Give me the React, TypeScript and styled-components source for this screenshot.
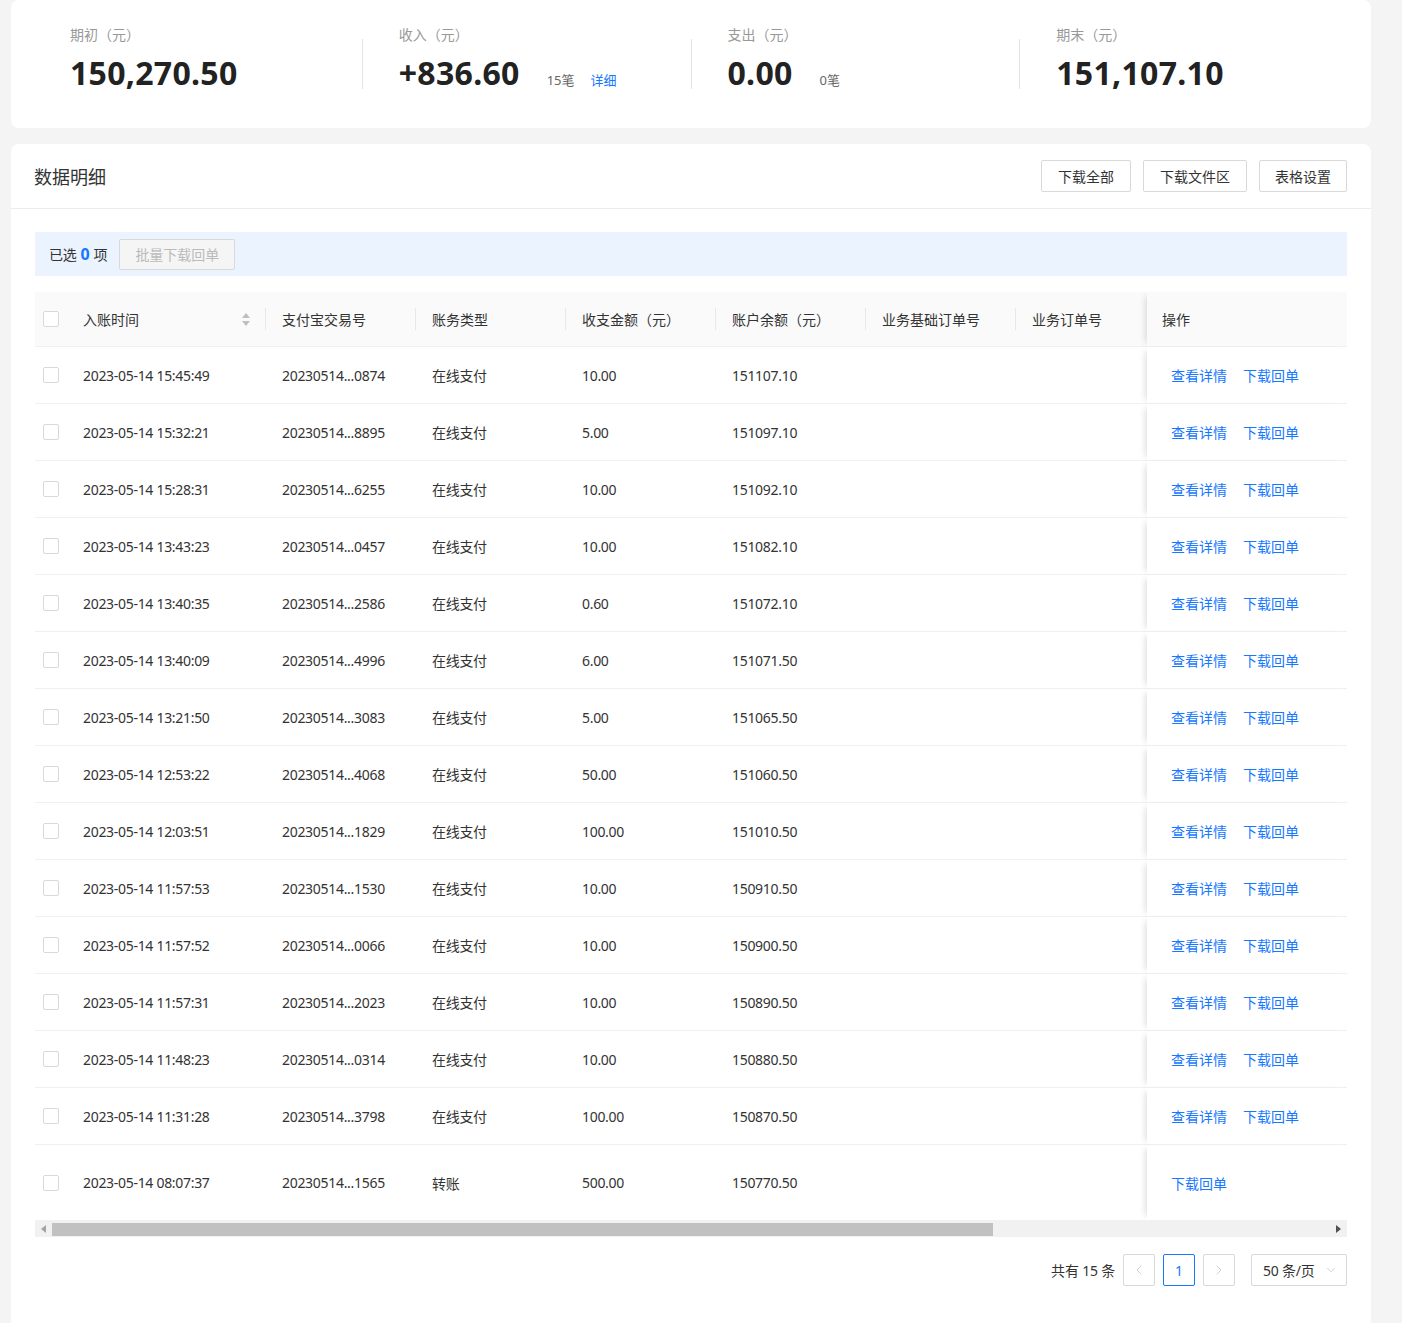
import React from "react"
import styled, { createGlobalStyle } from "styled-components"
import { ChevronLeft, ChevronRight, ChevronDown } from "lucide-react"

const GlobalStyle = createGlobalStyle`
    body {
        margin: 0;
        background-color: #f4f4f4;
        font-family: "Noto Sans", "Noto Sans CJK SC", sans-serif;
        color: #333;
        font-size: 14px;
    }
`

const Page = styled.div`
    width: 1360px;
    padding-left: 11px;
    display: flex;
    flex-direction: column;
    gap: 16px;
`

const Card = styled.div`
    background-color: #fff;
    border-radius: 8px;
`

const StatRow = styled(Card)`
    display: flex;
    align-items: flex-start;
    padding: 25px 23px 33px;
`

const Stat = styled.div`
    flex: 1;
    padding-left: 36px;
`

const StatDivider = styled.div`
    width: 1px;
    height: 50px;
    margin-top: 14px;
    background-color: #e3e3e3;
`

const StatLabel = styled.div`
    font-size: 14px;
    line-height: 20px;
    color: #999;
`

const StatValueRow = styled.div`
    display: flex;
    align-items: baseline;
    margin-top: 6px;
    height: 44px;
`

const StatValue = styled.span`
    font-size: 32px;
    line-height: 44px;
    font-weight: 700;
    color: #222;
    letter-spacing: 0.3px;
`

const StatCount = styled.span`
    font-size: 13px;
    color: #666;
    margin-left: 27px;
`

const LinkText = styled.a<{ $gap?: number; $small?: boolean }>`
    color: #1677ff;
    text-decoration: none;
    font-size: ${p => (p.$small ? 13 : 14)}px;
    margin-left: ${p => p.$gap || 0}px;
    cursor: pointer;
`

const DetailHeader = styled.div`
    display: flex;
    align-items: center;
    justify-content: space-between;
    height: 64px;
    padding: 0 24px 0 23px;
    border-bottom: 1px solid #ececec;
`

const DetailTitle = styled.h2`
    margin: 0;
    font-size: 18px;
    font-weight: 400;
    color: #333;
`

const ButtonGroup = styled.div`
    display: flex;
    gap: 12px;
`

const Button = styled.button<{ $narrow?: boolean }>`
    height: 32px;
    padding: 0 ${p => (p.$narrow ? 15 : 16)}px;
    background-color: #fff;
    border: 1px solid #d9d9d9;
    border-radius: 2px;
    font-family: inherit;
    font-size: 14px;
    color: #333;
    cursor: pointer;
`

const DisabledButton = styled(Button)`
    height: 31px;
    padding: 0 15px;
    background-color: #f5f5f5;
    color: #bbb;
    cursor: not-allowed;
`

const DetailBody = styled.div`
    padding: 23px 24px 60px;
`

const SelectBar = styled.div`
    display: flex;
    align-items: center;
    gap: 12px;
    height: 44px;
    padding-left: 14px;
    background-color: #ebf3ff;
    margin-bottom: 16px;
`

const SelectText = styled.span`
    letter-spacing: -0.2px;
`

const SelectCount = styled.b`
    color: #1677ff;
    font-size: 16px;
    margin: 0 4px;
`

const Table = styled.table`
    width: 1312px;
    table-layout: fixed;
    border-collapse: separate;
    border-spacing: 0;
`

const Th = styled.th<{ $divider?: boolean; $fixed?: boolean; $check?: boolean }>`
    height: 54px;
    text-align: left;
    font-weight: 400;
    color: #333;
    white-space: nowrap;
    background-color: #fafafa;
    border-bottom: 1px solid #f0f0f0;
    background-image: ${p => (p.$divider ? "linear-gradient(#e8e8e8, #e8e8e8)" : "none")};
    background-size: 1px 22px;
    background-repeat: no-repeat;
    background-position: right center;
    padding: 0 0 0 ${p => (p.$check ? 8 : p.$fixed ? 15 : 16)}px;
    box-shadow: ${p => (p.$fixed ? "-6px 0 6px -4px rgba(0, 0, 0, 0.12)" : "none")};
`

const Td = styled.td<{ $fixed?: boolean; $tall?: boolean; $check?: boolean }>`
    height: ${p => (p.$tall ? 75 : 56)}px;
    padding: 0 0 0 ${p => (p.$check ? 8 : p.$fixed ? 24 : 16)}px;
    white-space: nowrap;
    overflow: hidden;
    color: #333;
    letter-spacing: -0.3px;
    background-color: #fff;
    border-bottom: ${p => (p.$tall ? "none" : "1px solid #f0f0f0")};
    box-shadow: ${p => (p.$fixed ? "-6px 0 6px -4px rgba(0, 0, 0, 0.12)" : "none")};
`

const Checkbox = styled.span`
    display: block;
    width: 14px;
    height: 14px;
    border: 1px solid #d9d9d9;
    border-radius: 2px;
    background-color: #fff;
`

const SortHead = styled.div`
    display: flex;
    align-items: center;
    justify-content: space-between;
    padding-right: 16px;
`

const SortIcon = styled.svg`
    width: 8px;
    height: 13px;
`

const Actions = styled.div`
    display: flex;
    gap: 16px;
    letter-spacing: 0;
`

const ScrollTrack = styled.div`
    display: flex;
    align-items: center;
    height: 17px;
    background-color: #f1f1f1;
`

const ScrollArrow = styled.div`
    width: 17px;
    height: 17px;
    display: flex;
    align-items: center;
    justify-content: center;
`

const ScrollRail = styled.div`
    flex: 1;
    display: flex;
    align-items: center;
    height: 17px;
`

const ScrollThumb = styled.div<{ $ratio: number }>`
    width: ${p => p.$ratio * 100}%;
    height: 13px;
    margin-top: 2px;
    background-color: #c1c1c1;
`

const Pager = styled.div`
    display: flex;
    justify-content: flex-end;
    align-items: center;
    margin-top: 17px;
    gap: 8px;
`

const PagerTotal = styled.span`
    color: #333;
    letter-spacing: -0.2px;
`

const PageItem = styled.div<{ $active?: boolean }>`
    width: 30px;
    height: 30px;
    display: flex;
    align-items: center;
    justify-content: center;
    border: 1px solid ${p => (p.$active ? "#1677ff" : "#d9d9d9")};
    border-radius: 2px;
    color: ${p => (p.$active ? "#1677ff" : "#c4c4c4")};
    background-color: #fff;
`

const SizeSelect = styled.div`
    width: 75px;
    height: 30px;
    margin-left: 8px;
    padding: 0 8px 0 11px;
    display: flex;
    align-items: center;
    justify-content: space-between;
    border: 1px solid #d9d9d9;
    border-radius: 2px;
    color: #333;
    letter-spacing: -0.2px;
`

interface Row {
    time: string
    tradeNo: string
    type: string
    amount: string
    balance: string
    detail: boolean
}

const rows: Row[] = [
    { time: "2023-05-14 15:45:49", tradeNo: "20230514...0874", type: "在线支付", amount: "10.00", balance: "151107.10", detail: true },
    { time: "2023-05-14 15:32:21", tradeNo: "20230514...8895", type: "在线支付", amount: "5.00", balance: "151097.10", detail: true },
    { time: "2023-05-14 15:28:31", tradeNo: "20230514...6255", type: "在线支付", amount: "10.00", balance: "151092.10", detail: true },
    { time: "2023-05-14 13:43:23", tradeNo: "20230514...0457", type: "在线支付", amount: "10.00", balance: "151082.10", detail: true },
    { time: "2023-05-14 13:40:35", tradeNo: "20230514...2586", type: "在线支付", amount: "0.60", balance: "151072.10", detail: true },
    { time: "2023-05-14 13:40:09", tradeNo: "20230514...4996", type: "在线支付", amount: "6.00", balance: "151071.50", detail: true },
    { time: "2023-05-14 13:21:50", tradeNo: "20230514...3083", type: "在线支付", amount: "5.00", balance: "151065.50", detail: true },
    { time: "2023-05-14 12:53:22", tradeNo: "20230514...4068", type: "在线支付", amount: "50.00", balance: "151060.50", detail: true },
    { time: "2023-05-14 12:03:51", tradeNo: "20230514...1829", type: "在线支付", amount: "100.00", balance: "151010.50", detail: true },
    { time: "2023-05-14 11:57:53", tradeNo: "20230514...1530", type: "在线支付", amount: "10.00", balance: "150910.50", detail: true },
    { time: "2023-05-14 11:57:52", tradeNo: "20230514...0066", type: "在线支付", amount: "10.00", balance: "150900.50", detail: true },
    { time: "2023-05-14 11:57:31", tradeNo: "20230514...2023", type: "在线支付", amount: "10.00", balance: "150890.50", detail: true },
    { time: "2023-05-14 11:48:23", tradeNo: "20230514...0314", type: "在线支付", amount: "10.00", balance: "150880.50", detail: true },
    { time: "2023-05-14 11:31:28", tradeNo: "20230514...3798", type: "在线支付", amount: "100.00", balance: "150870.50", detail: true },
    { time: "2023-05-14 08:07:37", tradeNo: "20230514...1565", type: "转账", amount: "500.00", balance: "150770.50", detail: false },
]

const colWidths = [32, 199, 150, 150, 150, 150, 150, 131, 200]

const App = () => {
    return (
        <Page>
            <GlobalStyle />
            <StatRow>
                <Stat>
                    <StatLabel>期初（元）</StatLabel>
                    <StatValueRow>
                        <StatValue>150,270.50</StatValue>
                    </StatValueRow>
                </Stat>
                <StatDivider />
                <Stat>
                    <StatLabel>收入（元）</StatLabel>
                    <StatValueRow>
                        <StatValue>+836.60</StatValue>
                        <StatCount>15笔</StatCount>
                        <LinkText $gap={16} $small>详细</LinkText>
                    </StatValueRow>
                </Stat>
                <StatDivider />
                <Stat>
                    <StatLabel>支出（元）</StatLabel>
                    <StatValueRow>
                        <StatValue>0.00</StatValue>
                        <StatCount>0笔</StatCount>
                    </StatValueRow>
                </Stat>
                <StatDivider />
                <Stat>
                    <StatLabel>期末（元）</StatLabel>
                    <StatValueRow>
                        <StatValue>151,107.10</StatValue>
                    </StatValueRow>
                </Stat>
            </StatRow>

            <Card>
                <DetailHeader>
                    <DetailTitle>数据明细</DetailTitle>
                    <ButtonGroup>
                        <Button>下载全部</Button>
                        <Button>下载文件区</Button>
                        <Button $narrow>表格设置</Button>
                    </ButtonGroup>
                </DetailHeader>
                <DetailBody>
                    <SelectBar>
                        <SelectText>已选<SelectCount>0</SelectCount>项</SelectText>
                        <DisabledButton>批量下载回单</DisabledButton>
                    </SelectBar>

                    <Table>
                        <colgroup>
                            {colWidths.map((w, i) => (
                                <col key={i} width={w} />
                            ))}
                        </colgroup>
                        <thead>
                            <tr>
                                <Th $check><Checkbox /></Th>
                                <Th $divider>
                                    <SortHead>
                                        入账时间
                                        <SortIcon viewBox="0 0 8 13">
                                            <polygon points="4,0 8,5 0,5" fill="#bfbfbf" />
                                            <polygon points="0,8 8,8 4,13" fill="#bfbfbf" />
                                        </SortIcon>
                                    </SortHead>
                                </Th>
                                <Th $divider>支付宝交易号</Th>
                                <Th $divider>账务类型</Th>
                                <Th $divider>收支金额（元）</Th>
                                <Th $divider>账户余额（元）</Th>
                                <Th $divider>业务基础订单号</Th>
                                <Th>业务订单号</Th>
                                <Th $fixed>操作</Th>
                            </tr>
                        </thead>
                        <tbody>
                            {rows.map((r, i) => {
                                const tall = i === rows.length - 1
                                return (
                                    <tr key={r.time}>
                                        <Td $tall={tall} $check><Checkbox /></Td>
                                        <Td $tall={tall}>{r.time}</Td>
                                        <Td $tall={tall}>{r.tradeNo}</Td>
                                        <Td $tall={tall}>{r.type}</Td>
                                        <Td $tall={tall}>{r.amount}</Td>
                                        <Td $tall={tall}>{r.balance}</Td>
                                        <Td $tall={tall}></Td>
                                        <Td $tall={tall}></Td>
                                        <Td $tall={tall} $fixed>
                                            <Actions>
                                                {r.detail && <LinkText>查看详情</LinkText>}
                                                <LinkText>下载回单</LinkText>
                                            </Actions>
                                        </Td>
                                    </tr>
                                )
                            })}
                        </tbody>
                    </Table>

                    <ScrollTrack>
                        <ScrollArrow>
                            <svg width="5" height="8" viewBox="0 0 5 8"><polygon points="5,0 5,8 0,4" fill="#a3a3a3" /></svg>
                        </ScrollArrow>
                        <ScrollRail>
                            <ScrollThumb $ratio={0.736} />
                        </ScrollRail>
                        <ScrollArrow>
                            <svg width="5" height="8" viewBox="0 0 5 8"><polygon points="0,0 5,4 0,8" fill="#505050" /></svg>
                        </ScrollArrow>
                    </ScrollTrack>

                    <Pager>
                        <PagerTotal>共有 15 条</PagerTotal>
                        <PageItem><ChevronLeft size={16} strokeWidth={1.25} /></PageItem>
                        <PageItem $active>1</PageItem>
                        <PageItem><ChevronRight size={16} strokeWidth={1.25} /></PageItem>
                        <SizeSelect>
                            50 条/页
                            <ChevronDown size={14} strokeWidth={1.25} color="#bfbfbf" />
                        </SizeSelect>
                    </Pager>
                </DetailBody>
            </Card>
        </Page>
    )
}

export default App
